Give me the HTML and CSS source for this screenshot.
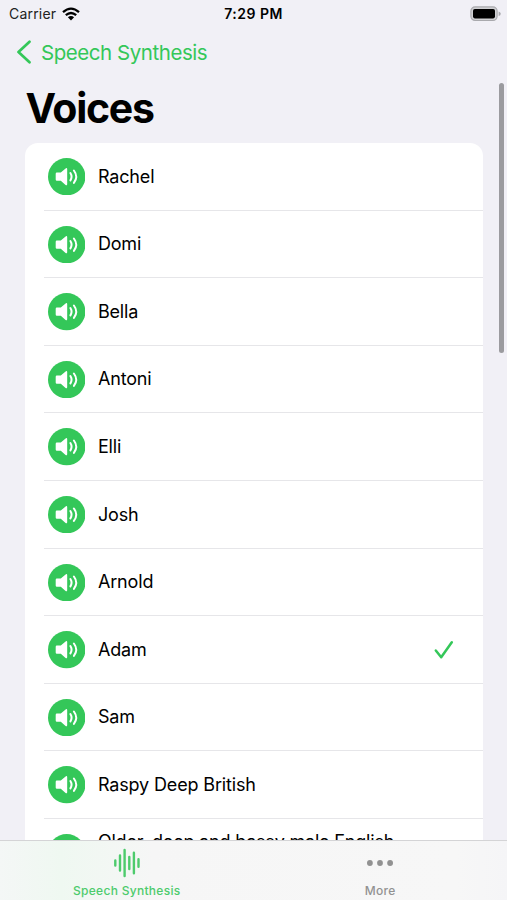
FILE: index.html
```
<!DOCTYPE html>
<html lang="en">
<head>
<meta charset="utf-8">
<title>Voices</title>
<link rel="stylesheet" href="styles.css">
</head>
<body>
<svg class="defs" aria-hidden="true">
  <symbol id="speaker" viewBox="0 0 37.4 37.4">
    <circle cx="18.7" cy="18.7" r="18.7" fill="#34c759"/>
    <path d="M8.9 14.6H12.8L17.3 10.7Q19.2 9.3 19.2 11.3V26.1Q19.2 28.2 17.3 26.8L12.8 22.8H8.9Q7.7 22.8 7.7 21.6V15.8Q7.7 14.6 8.9 14.6Z" fill="#fff"/>
    <path d="M22.4 15Q24.7 18.7 22.4 22.4M25.9 12.5Q30.6 18.7 25.9 24.9" fill="none" stroke="#fff" stroke-width="2" stroke-linecap="round"/>
  </symbol>
</svg>
<div class="status">
  <div class="carrier"><span>Carrier</span>
    <svg class="wifi" viewBox="0 0 18 14"><path d="M1 5.1Q9 -1.9 17 5.1M3.8 8.2Q9 3.7 14.2 8.2" fill="none" stroke="#000" stroke-width="2.3"/><path d="M9 13.4L5.9 10.2Q9 7.6 12.1 10.2Z"/></svg>
  </div>
  <div class="time">7:29 PM</div>
  <svg class="battery" viewBox="0 0 32 16"><rect x=".9" y=".9" width="26.2" height="13.6" rx="4.2" fill="#d0d0d3" stroke="#a9a9ad" stroke-width="1.2"/><rect x="3" y="3" width="22" height="9.4" rx="1.8"/><path d="M28.6 5.4Q30.8 6 30.8 7.7T28.6 10Z" fill="#a9a9ad"/></svg>
</div>
<div class="nav">
  <svg class="back" viewBox="0 0 16 24"><path d="M13.5 1.7L2.5 12L13.5 22.3" fill="none" stroke="#34c759" stroke-width="2.7" stroke-linecap="round" stroke-linejoin="round"/></svg>
  <span>Speech Synthesis</span>
</div>
<h1>Voices</h1>
<main>
  <ul class="list">
    <li><svg class="icon"><use href="#speaker"/></svg><div class="label"><span>Rachel</span></div></li>
    <li><svg class="icon"><use href="#speaker"/></svg><div class="label"><span>Domi</span></div></li>
    <li><svg class="icon"><use href="#speaker"/></svg><div class="label"><span>Bella</span></div></li>
    <li><svg class="icon"><use href="#speaker"/></svg><div class="label"><span>Antoni</span></div></li>
    <li><svg class="icon"><use href="#speaker"/></svg><div class="label"><span>Elli</span></div></li>
    <li><svg class="icon"><use href="#speaker"/></svg><div class="label"><span>Josh</span></div></li>
    <li><svg class="icon"><use href="#speaker"/></svg><div class="label"><span>Arnold</span></div></li>
    <li><svg class="icon"><use href="#speaker"/></svg><div class="label"><span>Adam</span></div>
      <svg class="check" viewBox="0 0 20 20"><path d="M1.8 10.5L7.2 17.2L17.8 2.2" fill="none" stroke="#34c759" stroke-width="2.5" stroke-linecap="round" stroke-linejoin="round"/></svg></li>
    <li><svg class="icon"><use href="#speaker"/></svg><div class="label"><span>Sam</span></div></li>
    <li><svg class="icon"><use href="#speaker"/></svg><div class="label"><span>Raspy Deep British</span></div></li>
    <li class="tall"><svg class="icon"><use href="#speaker"/></svg><div class="label"><span>Older, deep and bassy male English</span></div></li>
  </ul>
</main>
<div class="scrollbar"></div>
<nav class="tabs">
  <div class="tab active">
    <svg class="tab-icon" viewBox="0 0 30 30"><path d="M3.3 12.4V17.6M8 7.4V22.6M12.6 1.9V28.1M17.3 9V21M21.9 4.8V25.2M26.5 11.2V18.8" fill="none" stroke="#4dcb6c" stroke-width="2.4" stroke-linecap="round"/></svg>
    <span>Speech Synthesis</span>
  </div>
  <div class="tab">
    <svg class="tab-icon" viewBox="0 0 30 30"><g fill="#929292"><circle cx="4.9" cy="15" r="2.9"/><circle cx="15" cy="15" r="2.9"/><circle cx="25.1" cy="15" r="2.9"/></g></svg>
    <span>More</span>
  </div>
</nav>
</body>
</html>
```
FILE: styles.css
```
* { box-sizing: border-box; }
body {
  margin: 0;
  width: 507px;
  height: 900px;
  overflow: hidden;
  display: flex;
  flex-direction: column;
  background: #f1f0f6;
  color: #000;
  font-family: Inter, "Liberation Sans", sans-serif;
}
svg { display: block; flex: none; }
.defs { position: absolute; width: 0; height: 0; }
.status {
  height: 28px;
  flex: none;
  display: grid;
  grid-template-columns: 1fr auto 1fr;
  align-items: center;
  padding: 0 9px 0 9px;
  font-size: 14px;
  line-height: 28px;
}
.carrier { display: flex; align-items: center; gap: 6px; color: #222; letter-spacing: .2px; }
.wifi { width: 18px; height: 14px; margin-top: -1px; }
.time { font-weight: 600; letter-spacing: .5px; }
.battery { width: 32px; height: 16px; justify-self: end; margin-top: -1px; margin-right: -4px; }
.nav {
  height: 48px;
  flex: none;
  display: flex;
  align-items: center;
  gap: 9px;
  padding-left: 16px;
  color: #34c759;
  font-size: 20.5px;
  letter-spacing: -.45px;
}
.back { width: 16px; height: 24px; }
h1 {
  margin: 0;
  height: 66.5px;
  flex: none;
  padding-left: 25.5px;
  font-size: 41px;
  line-height: 65px;
  font-weight: 700;
  letter-spacing: -1.3px;
}
main { flex: 1; min-height: 0; overflow: hidden; padding: 0 24.5px 0 25px; }
.list {
  list-style: none;
  margin: 0;
  padding: .6px 0 0;
  background: #fff;
  border-radius: 13px 13px 0 0;
}
.list li {
  height: 67.6px;
  display: flex;
  align-items: center;
  padding: .6px 29px 0 4px;
  margin-left: 19px;
  border-bottom: 1px solid #e6e6e9;
}
.icon { width: 37.4px; height: 37.4px; }
.label { flex: 1; padding-left: 12.5px; font-size: 18px; line-height: 24px; letter-spacing: -.15px; white-space: nowrap; }
.check { width: 20px; height: 20px; }
.list .tall .label { align-self: flex-start; padding-top: 10px; letter-spacing: -.2px; }
.scrollbar {
  position: absolute;
  left: 499px;
  top: 83px;
  width: 5px;
  height: 270px;
  border-radius: 3px;
  background: #9b9b9f;
}
.tabs {
  height: 60.5px;
  flex: none;
  display: flex;
  border-top: 1px solid #d4d4d6;
  background: linear-gradient(90deg, #f4f7f6 0, #eff8f1 12%, #f6f6f6 30%, #f7f7f7 90%, #f5f5f7 100%);
}
.tab {
  flex: 1;
  display: flex;
  flex-direction: column;
  align-items: center;
  padding-top: 7px;
  font-size: 12px;
  font-weight: 500;
  line-height: 16px;
  letter-spacing: .3px;
  gap: 5px;
  color: #929292;
}
.active { color: #4dcb6c; }
.tab-icon { width: 30px; height: 30px; }
```
